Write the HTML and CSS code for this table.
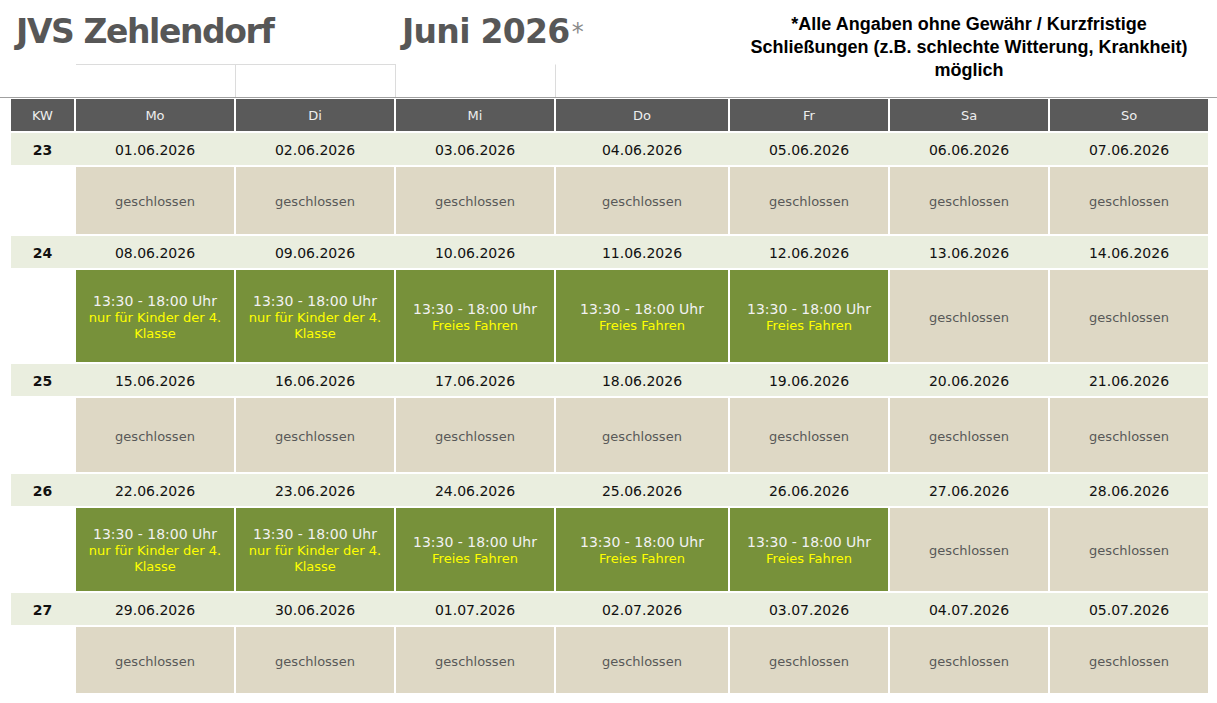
FILE: index.html
```html
<!DOCTYPE html>
<html lang="de">
<head>
<meta charset="utf-8">
<title>JVS Zehlendorf – Juni 2026</title>
<link rel="stylesheet" href="styles.css">
</head>
<body>
<header class="top">
  <h1 class="title">JVS Zehlendorf</h1>
  <h2 class="month">Juni 2026<span class="star">*</span></h2>
  <p class="note">*Alle Angaben ohne Gewähr / Kurzfristige Schließungen (z.B. schlechte Witterung, Krankheit) möglich</p>
  <div class="frame frame-a"></div>
  <div class="frame frame-b"></div>
  <div class="frame frame-c"></div>
</header>

<main class="cal">
  <div class="head">KW</div>
  <div class="head">Mo</div>
  <div class="head">Di</div>
  <div class="head">Mi</div>
  <div class="head">Do</div>
  <div class="head">Fr</div>
  <div class="head">Sa</div>
  <div class="head">So</div>

  <div class="dates">
    <span class="kw">23</span><span>01.06.2026</span><span>02.06.2026</span><span>03.06.2026</span><span>04.06.2026</span><span>05.06.2026</span><span>06.06.2026</span><span>07.06.2026</span>
  </div>
  <div class="blank"></div>
  <div class="closed">geschlossen</div>
  <div class="closed">geschlossen</div>
  <div class="closed">geschlossen</div>
  <div class="closed">geschlossen</div>
  <div class="closed">geschlossen</div>
  <div class="closed">geschlossen</div>
  <div class="closed">geschlossen</div>

  <div class="dates">
    <span class="kw">24</span><span>08.06.2026</span><span>09.06.2026</span><span>10.06.2026</span><span>11.06.2026</span><span>12.06.2026</span><span>13.06.2026</span><span>14.06.2026</span>
  </div>
  <div class="blank"></div>
  <div class="open"><span class="time">13:30 - 18:00 Uhr</span><span class="info">nur für Kinder der 4. Klasse</span></div>
  <div class="open"><span class="time">13:30 - 18:00 Uhr</span><span class="info">nur für Kinder der 4. Klasse</span></div>
  <div class="open"><span class="time">13:30 - 18:00 Uhr</span><span class="info">Freies Fahren</span></div>
  <div class="open"><span class="time">13:30 - 18:00 Uhr</span><span class="info">Freies Fahren</span></div>
  <div class="open"><span class="time">13:30 - 18:00 Uhr</span><span class="info">Freies Fahren</span></div>
  <div class="closed">geschlossen</div>
  <div class="closed">geschlossen</div>

  <div class="dates">
    <span class="kw">25</span><span>15.06.2026</span><span>16.06.2026</span><span>17.06.2026</span><span>18.06.2026</span><span>19.06.2026</span><span>20.06.2026</span><span>21.06.2026</span>
  </div>
  <div class="blank"></div>
  <div class="closed">geschlossen</div>
  <div class="closed">geschlossen</div>
  <div class="closed">geschlossen</div>
  <div class="closed">geschlossen</div>
  <div class="closed">geschlossen</div>
  <div class="closed">geschlossen</div>
  <div class="closed">geschlossen</div>

  <div class="dates">
    <span class="kw">26</span><span>22.06.2026</span><span>23.06.2026</span><span>24.06.2026</span><span>25.06.2026</span><span>26.06.2026</span><span>27.06.2026</span><span>28.06.2026</span>
  </div>
  <div class="blank"></div>
  <div class="open"><span class="time">13:30 - 18:00 Uhr</span><span class="info">nur für Kinder der 4. Klasse</span></div>
  <div class="open"><span class="time">13:30 - 18:00 Uhr</span><span class="info">nur für Kinder der 4. Klasse</span></div>
  <div class="open"><span class="time">13:30 - 18:00 Uhr</span><span class="info">Freies Fahren</span></div>
  <div class="open"><span class="time">13:30 - 18:00 Uhr</span><span class="info">Freies Fahren</span></div>
  <div class="open"><span class="time">13:30 - 18:00 Uhr</span><span class="info">Freies Fahren</span></div>
  <div class="closed">geschlossen</div>
  <div class="closed">geschlossen</div>

  <div class="dates">
    <span class="kw">27</span><span>29.06.2026</span><span>30.06.2026</span><span>01.07.2026</span><span>02.07.2026</span><span>03.07.2026</span><span>04.07.2026</span><span>05.07.2026</span>
  </div>
  <div class="blank"></div>
  <div class="closed">geschlossen</div>
  <div class="closed">geschlossen</div>
  <div class="closed">geschlossen</div>
  <div class="closed">geschlossen</div>
  <div class="closed">geschlossen</div>
  <div class="closed">geschlossen</div>
  <div class="closed">geschlossen</div>
</main>
</body>
</html>
```

FILE: styles.css
```css
html, body {
  margin: 0;
  padding: 0;
  background: #ffffff;
}

body {
  font-family: "DejaVu Sans", Verdana, sans-serif;
  color: #111;
}

/* ---------- top header ---------- */
.top {
  display: grid;
  grid-template-columns: 76px 160px 160px 160px 174px 478px 1fr;
  grid-template-rows: 64px 33px;
  border-bottom: 1px solid #a0a0a0;
}

.title,
.month {
  margin: 0;
  padding-top: 13px;
  font-family: "DejaVu Sans", Tahoma, sans-serif;
  font-weight: bold;
  font-size: 33px;
  line-height: 38px;
  color: #575757;
  white-space: nowrap;
}

.title {
  grid-column: 1 / 4;
  grid-row: 1;
  padding-left: 16px;
  letter-spacing: -1.4px;
}

.month {
  grid-column: 4 / 6;
  grid-row: 1;
  padding-left: 6px;
  letter-spacing: -0.7px;
}

.star {
  font-weight: normal;
  font-size: 24px;
  letter-spacing: 0;
  color: #8a8a8a;
  margin-left: 2px;
  vertical-align: 3px;
}

.note {
  grid-column: 6;
  grid-row: 1 / 3;
  margin: 0;
  padding: 13px 6px 0;
  font-family: "Liberation Sans", Arial, sans-serif;
  font-weight: bold;
  font-size: 18px;
  line-height: 23px;
  text-align: center;
  color: #000;
}

.frame {
  grid-row: 2;
  border-right: 1px solid #dcdcdc;
}

.frame-a {
  grid-column: 2;
  border-top: 1px solid #dcdcdc;
}

.frame-b {
  grid-column: 3;
  border-top: 1px solid #dcdcdc;
}

.frame-c {
  grid-column: 4;
  border-top: 1px solid transparent;
}

/* ---------- calendar ---------- */
.cal {
  display: grid;
  grid-template-columns: 63px 158px 158px 158px 172px 158px 158px 158px;
  grid-template-rows: 32px 32px 67px 32px 92px 32px 74px 32px 83px 32px 66px;
  gap: 2px;
  margin: 1px 0 0 11px;
}

.head {
  display: flex;
  align-items: center;
  justify-content: center;
  background: #5a5a5a;
  color: #eeeeee;
  font-size: 13px;
}

.dates {
  grid-column: 1 / -1;
  display: grid;
  grid-template-columns: 63px 158px 158px 158px 172px 158px 158px 158px;
  column-gap: 2px;
  align-items: center;
  padding-top: 2px;
  background: #eaeedf;
  font-size: 14px;
  color: #111;
  text-align: center;
}

.kw {
  font-weight: bold;
}

.blank {
  background: transparent;
}

.closed {
  display: flex;
  align-items: center;
  justify-content: center;
  padding-top: 2px;
  background: #ded8c5;
  color: #585858;
  font-size: 13px;
}

.open {
  display: flex;
  flex-direction: column;
  align-items: center;
  justify-content: center;
  background: #77913a;
  text-align: center;
  padding: 2px 8px 0;
}

.time {
  font-size: 14px;
  line-height: 17px;
  color: #f2f2f2;
}

.info {
  font-size: 13px;
  line-height: 16px;
  color: #ffff00;
}
```
